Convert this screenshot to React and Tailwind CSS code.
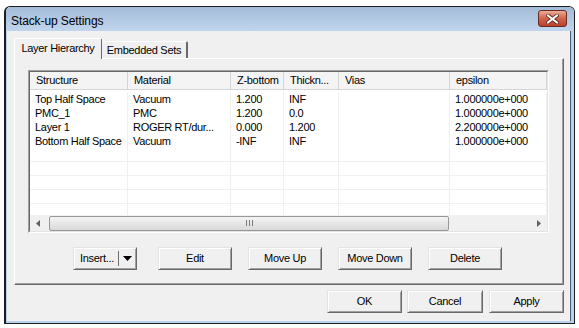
import React from "react";

const columns = [
  { key: "structure", label: "Structure", w: "w-[98px]" },
  { key: "material", label: "Material", w: "w-[103px]" },
  { key: "zbottom", label: "Z-bottom", w: "w-[53px]" },
  { key: "thick", label: "Thickn...", w: "w-[55px]" },
  { key: "vias", label: "Vias", w: "w-[111px]" },
  { key: "eps", label: "epsilon", w: "flex-1" },
];

const rows = [
  { structure: "Top Half Space", material: "Vacuum", zbottom: "1.200", thick: "INF", vias: "", eps: "1.000000e+000" },
  { structure: "PMC_1", material: "PMC", zbottom: "1.200", thick: "0.0", vias: "", eps: "1.000000e+000" },
  { structure: "Layer 1", material: "ROGER RT/dur...", zbottom: "0.000", thick: "1.200", vias: "", eps: "2.200000e+000" },
  { structure: "Bottom Half Space", material: "Vacuum", zbottom: "-INF", thick: "INF", vias: "", eps: "1.000000e+000" },
];

const emptyRows = [0, 1, 2, 3, 4, 5];

const btn =
  "h-[23px] flex items-center justify-center bg-[#f0f0f0] text-[11px] tracking-[-0.3px] text-black border-t border-l border-[#e3e3e3] border-r-[#696969] border-b-[#696969] border-r border-b shadow-[inset_1px_1px_0_#ffffff,inset_-1px_-1px_0_#a0a0a0]";

const Btn = ({ children, className = "" }) => (
  <div className={`${btn} ${className}`}>{children}</div>
);

const App = () => {
  return (
    <div className="w-[579px] h-[328px] bg-white pt-[6px] pl-[4px] font-['Liberation_Sans',Arial,sans-serif] overflow-hidden">
      {/* Window */}
      <div className="w-[571px] h-[318px] border border-l-2 border-[#1e1e1e] rounded-t-[6px] flex flex-col overflow-hidden">
        {/* Title bar */}
        <div className="h-[24px] flex items-start justify-between pl-[5px] pr-[7px] bg-gradient-to-b from-[#a2bbd8] to-[#c1d6ed]">
          <span className="text-[12px] leading-[24px] pt-[2px] text-black tracking-[-0.1px]">Stack-up Settings</span>
          <div className="mt-[3px] w-[29px] h-[17px] rounded-[3px] border border-[#6b2a1c] bg-gradient-to-b from-[#e9ad98] via-[#d0634c] to-[#b9412c] flex items-center justify-center">
            <svg width="13" height="10" viewBox="0 0 13 10">
              <path d="M2 1.5 L11 8.5 M11 1.5 L2 8.5" stroke="#5a2216" strokeWidth="3.6" strokeLinecap="square" />
              <path d="M2 1.5 L11 8.5 M11 1.5 L2 8.5" stroke="#ffffff" strokeWidth="2" strokeLinecap="square" />
            </svg>
          </div>
        </div>

        {/* Body */}
        <div className="flex-1 flex">
          <div className="w-px bg-[#b9d1ea]"></div>
          <div className="flex-1 bg-[#f0f0f0] pt-[7px] pl-[7px] pr-[6px] flex flex-col">
            {/* Tabs */}
            <div className="h-[20px] flex items-end">
              <div className="relative z-10 w-[88px] h-[21px] -mb-px bg-[#f0f0f0] border-t border-l border-white border-r border-r-[#696969] rounded-t-[2px] flex items-center justify-center text-[11px] tracking-[-0.3px] text-black pb-[2px]">
                Layer Hierarchy
              </div>
              <div className="w-[86px] h-[17px] bg-[#f0f0f0] border-t border-white border-r-2 border-r-[#696969] rounded-t-[2px] flex items-center justify-center text-[11px] tracking-[-0.3px] text-black">
                Embedded Sets
              </div>
            </div>

            {/* Tab panel */}
            <div className="w-[550px] h-[227px] border-t border-l border-white border-r border-b border-r-[#696969] border-b-[#696969] shadow-[inset_-1px_-1px_0_#a0a0a0] flex flex-col">
              {/* List view */}
              <div className="ml-[13px] mt-[11px] w-[521px] h-[163px] border border-t-[#a0a0a0] border-l-[#a0a0a0] border-r-white border-b-white">
                <div className="w-full h-full border border-t-[#696969] border-l-[#696969] border-r-[#e3e3e3] border-b-[#e3e3e3] bg-white flex flex-col">
                  {/* Header */}
                  <div className="h-[18px] flex bg-[#f4f4f4] border-b border-[#d5d5d5]">
                    {columns.map((c) => (
                      <div
                        key={c.key}
                        className={`${c.w} h-full border-r border-[#d5d5d5] pl-[6px] text-[11px] tracking-[-0.3px] leading-[17px] text-black whitespace-nowrap overflow-hidden`}
                      >
                        {c.label}
                      </div>
                    ))}
                  </div>

                  {/* Rows */}
                  <div className="flex-1 overflow-hidden pt-[2px]">
                    {rows.map((r, i) => (
                      <div key={i} className="h-[14px] flex">
                        {columns.map((c) => (
                          <div
                            key={c.key}
                            className={`${c.w} h-full border-r border-[#f0f0f0] pl-[5px] text-[11px] tracking-[-0.3px] leading-[14px] text-black whitespace-nowrap overflow-hidden`}
                          >
                            {r[c.key]}
                          </div>
                        ))}
                      </div>
                    ))}
                    {emptyRows.map((i) => (
                      <div key={"e" + i} className="h-[14px] flex border-b border-[#f0f0f0]">
                        {columns.map((c) => (
                          <div key={c.key} className={`${c.w} h-full border-r border-[#f0f0f0]`}></div>
                        ))}
                      </div>
                    ))}
                  </div>

                  {/* Horizontal scrollbar */}
                  <div className="h-[16px] flex items-center bg-[#f0f0f0]">
                    <div className="w-[16px] h-full flex items-center justify-center">
                      <svg width="4" height="7" viewBox="0 0 4 7">
                        <path d="M4 0 L0 3.5 L4 7 Z" fill="#606060" />
                      </svg>
                    </div>
                    <div className="ml-[3px] w-[400px] h-[15px] rounded-[2px] border border-[#979797] bg-gradient-to-b from-[#f4f4f4] to-[#d9d9d9] flex items-center justify-center">
                      <div className="flex gap-[2px]">
                        <div className="w-px h-[6px] bg-[#7a7a7a]"></div>
                        <div className="w-px h-[6px] bg-[#7a7a7a]"></div>
                        <div className="w-px h-[6px] bg-[#7a7a7a]"></div>
                      </div>
                    </div>
                    <div className="flex-1"></div>
                    <div className="w-[16px] h-full flex items-center justify-center">
                      <svg width="4" height="7" viewBox="0 0 4 7">
                        <path d="M0 0 L4 3.5 L0 7 Z" fill="#606060" />
                      </svg>
                    </div>
                  </div>
                </div>
              </div>

              {/* Action buttons */}
              <div className="mt-[14px] flex">
                <Btn className="ml-[58px] w-[64px] justify-start pl-[6px]">
                  <span>Insert...</span>
                  <div className="ml-[4px] w-px h-[15px] bg-[#6f6f6f]"></div>
                  <svg className="ml-[4px]" width="9" height="5" viewBox="0 0 9 5">
                    <path d="M0 0 L9 0 L4.5 5 Z" fill="#000000" />
                  </svg>
                </Btn>
                <Btn className="ml-[21px] w-[74px]">Edit</Btn>
                <Btn className="ml-[16px] w-[74px]">Move Up</Btn>
                <Btn className="ml-[16px] w-[74px]">Move Down</Btn>
                <Btn className="ml-[16px] w-[74px]">Delete</Btn>
              </div>
            </div>

            {/* Dialog buttons */}
            <div className="mt-[5px] flex justify-end">
              <Btn className="w-[75px]">OK</Btn>
              <Btn className="ml-[5px] w-[76px]">Cancel</Btn>
              <Btn className="ml-[6px] w-[75px]">Apply</Btn>
            </div>
          </div>
          <div className="w-[4px] border-l border-[#4b5d70] bg-[#b9d1ea]"></div>
        </div>
        <div className="h-[2px] bg-[#b9d1ea]"></div>
      </div>
    </div>
  );
};

export default App;
